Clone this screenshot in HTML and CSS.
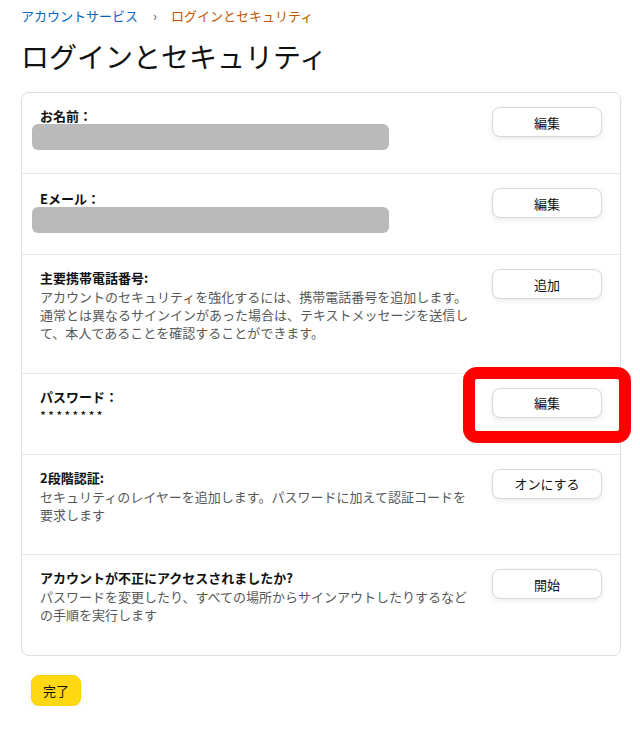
FILE: index.html
```html
<!DOCTYPE html>
<html lang="ja">
<head>
    <meta charset="UTF-8">
    <title>ログインとセキュリティ</title>
    <link rel="stylesheet" href="styles.css">
</head>
<body>
    <div class="page">
        <div class="breadcrumb">
            <a href="#" class="crumb-link">アカウントサービス</a>
            <span class="crumb-sep">›</span>
            <span class="crumb-current">ログインとセキュリティ</span>
        </div>

        <h1 class="title">ログインとセキュリティ</h1>

        <div class="card">
            <div class="row">
                <div class="info">
                    <div class="label">お名前：</div>
                    <div class="redacted"></div>
                </div>
                <div class="action"><button class="btn">編集</button></div>
            </div>

            <div class="row row-email">
                <div class="info">
                    <div class="label">Eメール：</div>
                    <div class="redacted"></div>
                </div>
                <div class="action"><button class="btn">編集</button></div>
            </div>

            <div class="row">
                <div class="info">
                    <div class="label">主要携帯電話番号:</div>
                    <div class="desc">アカウントのセキュリティを強化するには、携帯電話番号を追加します。通常とは異なるサインインがあった場合は、テキストメッセージを送信して、本人であることを確認することができます。</div>
                </div>
                <div class="action"><button class="btn">追加</button></div>
            </div>

            <div class="row">
                <div class="info">
                    <div class="label">パスワード：</div>
                    <div class="desc stars">********</div>
                </div>
                <div class="action marked">
                    <button class="btn">編集</button>
                    <span class="highlight"></span>
                </div>
            </div>

            <div class="row">
                <div class="info">
                    <div class="label">2段階認証:</div>
                    <div class="desc">セキュリティのレイヤーを追加します。パスワードに加えて認証コードを要求します</div>
                </div>
                <div class="action"><button class="btn">オンにする</button></div>
            </div>

            <div class="row">
                <div class="info">
                    <div class="label">アカウントが不正にアクセスされましたか?</div>
                    <div class="desc">パスワードを変更したり、すべての場所からサインアウトしたりするなどの手順を実行します</div>
                </div>
                <div class="action"><button class="btn">開始</button></div>
            </div>
        </div>

        <button class="btn-done">完了</button>
    </div>
</body>
</html>
```

FILE: styles.css
```css
body {
    margin: 0;
    background-color: #fff;
    font-family: "Noto Sans CJK JP", "Noto Sans", sans-serif;
    color: #0f1111;
}

.page {
    padding: 6px 19px 0 21px;
}

.breadcrumb {
    font-size: 13px;
    line-height: 20px;
    display: flex;
    align-items: center;
}

.crumb-link {
    color: #0066c0;
    text-decoration: none;
}

.crumb-sep {
    color: #555;
    margin: 0 14px 0 15px;
}

.crumb-current {
    color: #c45500;
}

.title {
    font-size: 28px;
    font-weight: 400;
    line-height: 36px;
    margin: 12px 0 18px;
}

.card {
    width: 600px;
    box-sizing: border-box;
    border: 1px solid #ddd;
    border-radius: 8px;
}

.row {
    display: grid;
    grid-template-columns: 434px 110px;
    column-gap: 18px;
    padding: 13px 18px 22px;
    border-top: 1px solid #e7e7e7;
}

.row:first-child {
    border-top: none;
}

.row-email {
    padding-top: 15px;
    padding-bottom: 20px;
}

.row-email .action {
    padding-top: 0;
    margin-top: -1px;
}

.label {
    font-size: 13px;
    font-weight: 700;
    line-height: 20px;
}

.desc {
    font-size: 13px;
    line-height: 18.2px;
    color: #565959;
    margin-bottom: 8px;
}

.stars {
    color: #0f1111;
    letter-spacing: 2px;
    margin-bottom: 7px;
}

.redacted {
    height: 26px;
    width: 357px;
    margin: -2px 0 1px -8px;
    background-color: #bababa;
    border-radius: 6px;
}

.action {
    padding-top: 1px;
}

.marked {
    position: relative;
}

.btn {
    display: block;
    width: 110px;
    height: 30px;
    box-sizing: border-box;
    background-color: #fff;
    border: 1px solid #d5d9d9;
    border-radius: 8px;
    box-shadow: 0 2px 5px rgba(213, 217, 217, 0.5);
    font-family: inherit;
    font-size: 13px;
    color: #0f1111;
    cursor: pointer;
}

.highlight {
    position: absolute;
    left: -29px;
    top: -20px;
    width: 168px;
    height: 76px;
    box-sizing: border-box;
    border: 12px solid #ff0000;
    border-radius: 14px;
}

.btn-done {
    margin: 19px 0 0 10px;
    height: 31px;
    padding: 0 11px;
    background-color: #ffd814;
    border: 1px solid #fcd200;
    border-radius: 8px;
    box-shadow: 0 2px 5px rgba(213, 217, 217, 0.5);
    font-family: inherit;
    font-size: 13px;
    color: #0f1111;
    cursor: pointer;
}
```
